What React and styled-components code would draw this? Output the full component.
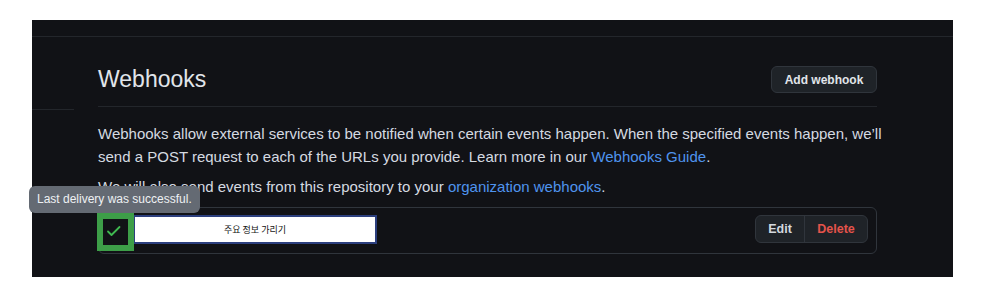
import React from "react";
import styled, { createGlobalStyle } from "styled-components";

const colors = {
  canvas: "#111216",
  border: "#30353c",
  muted: "#23262b",
  text: "#d5dae1",
  title: "#e1e5ea",
  link: "#4f94ee",
  danger: "#e5534b",
  buttonBg: "#1f2328",
  success: "#3fb950",
};

const GlobalStyle = createGlobalStyle`
  body {
    margin: 0;
    background: #ffffff;
    font-family: "Liberation Sans", Arial, sans-serif;
  }
`;

const Panel = styled.div`
  margin: 20px 0 0 32px;
  width: 921px;
  height: 257px;
  background: ${colors.canvas};
  position: relative;
`;

const TopBar = styled.div`
  height: 16px;
  border-bottom: 1px solid ${colors.muted};
`;

const Body = styled.div`
  display: flex;
`;

const Sidebar = styled.nav`
  width: 42px;
`;

const NavItem = styled.div`
  height: 72px;
  border-bottom: 1px solid ${colors.muted};
`;

const Main = styled.main`
  margin-left: 24px;
  width: 779px;
  padding-top: 29px;
`;

const Subhead = styled.div`
  display: flex;
  align-items: center;
  justify-content: space-between;
  padding-bottom: 13px;
  border-bottom: 1px solid ${colors.muted};
`;

const Title = styled.h2`
  margin: 0;
  font-size: 23px;
  line-height: 27px;
  font-weight: 400;
  color: ${colors.title};
`;

const Button = styled.button`
  height: 27px;
  width: 106px;
  padding: 0;
  background: ${colors.buttonBg};
  border: 1px solid ${colors.border};
  border-radius: 6px;
  color: ${colors.title};
  font-family: inherit;
  font-size: 12px;
  font-weight: 700;
`;

const Text = styled.p`
  margin: ${(p) => (p.first ? "15px" : "7px")} 0 0;
  width: 800px;
  font-size: 15px;
  line-height: 23px;
  color: ${colors.text};

  a {
    color: ${colors.link};
    text-decoration: none;
  }
`;

const HookRow = styled.div`
  position: relative;
  margin-top: 9px;
  display: flex;
  align-items: flex-start;
  padding: 7px 8px 9px;
  border: 1px solid ${colors.border};
  border-radius: 6px;
`;

const Tooltip = styled.div`
  position: absolute;
  left: -70px;
  top: -22px;
  z-index: 2;
  height: 27px;
  padding: 0 8px;
  background: #646a73;
  border-radius: 6px;
  color: #eef1f4;
  font-size: 12px;
  line-height: 27px;
  white-space: nowrap;
`;

const StatusMark = styled.div`
  box-sizing: border-box;
  width: 37px;
  height: 38px;
  margin: -2px 0 -8px -10px;
  padding: 4px 0 0 3px;
  border: 6px solid #3d9e48;
  background: ${colors.canvas};
  position: relative;
  z-index: 1;
`;

const Redaction = styled.div`
  box-sizing: border-box;
  width: 244px;
  height: 29px;
  margin-left: -1px;
  border: 2px solid #2c3f7e;
  background: #ffffff;
  display: flex;
  align-items: center;
  justify-content: center;
  color: #111111;
  font-family: "Noto Sans CJK KR", sans-serif;
  font-size: 9px;
`;

const ButtonGroup = styled.div`
  margin-left: auto;
  display: flex;
  height: 28px;
  border: 1px solid ${colors.border};
  border-radius: 6px;
  background: ${colors.buttonBg};
  overflow: hidden;
  box-sizing: border-box;
`;

const GroupButton = styled.button`
  width: ${(p) => (p.danger ? "63px" : "48px")};
  padding: 0;
  border: 0;
  border-left: ${(p) => (p.danger ? `1px solid ${colors.border}` : "0")};
  background: transparent;
  color: ${(p) => (p.danger ? colors.danger : "#d3d8de")};
  font-family: inherit;
  font-size: 12.5px;
  font-weight: 700;
`;

function CheckIcon() {
  return (
    <svg width="16" height="12" viewBox="0 0 16 12" fill="none">
      <path
        d="M2 6.5l3.5 3.5L13.5 2"
        stroke={colors.success}
        strokeWidth="1.8"
        strokeLinecap="round"
        strokeLinejoin="round"
      />
    </svg>
  );
}

export default function App() {
  return (
    <>
      <GlobalStyle />
      <Panel>
        <TopBar />
        <Body>
          <Sidebar>
            <NavItem />
          </Sidebar>
          <Main>
            <Subhead>
              <Title>Webhooks</Title>
              <Button>Add webhook</Button>
            </Subhead>
            <Text first>
              Webhooks allow external services to be notified when certain events happen. When the specified events happen, we’ll
              send a POST request to each of the URLs you provide. Learn more in our <a href="#">Webhooks Guide</a>.
            </Text>
            <Text>
              We will also send events from this repository to your <a href="#">organization webhooks</a>.
            </Text>
            <HookRow>
              <Tooltip>Last delivery was successful.</Tooltip>
              <StatusMark>
                <CheckIcon />
              </StatusMark>
              <Redaction>주요 정보 가리기</Redaction>
              <ButtonGroup>
                <GroupButton>Edit</GroupButton>
                <GroupButton danger>Delete</GroupButton>
              </ButtonGroup>
            </HookRow>
          </Main>
        </Body>
      </Panel>
    </>
  );
}
